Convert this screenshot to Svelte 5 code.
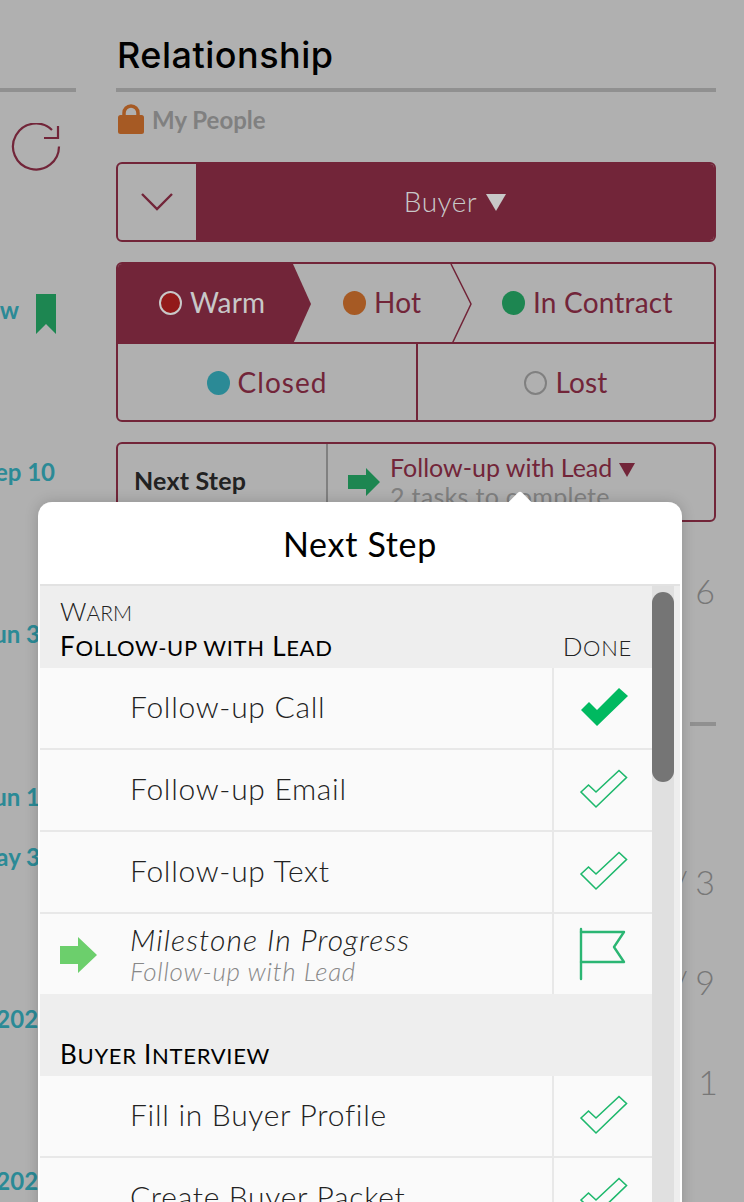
<script>
  const dates = [
    { label: 'Sep 10', cls: 'd1' },
    { label: 'Jun 3', cls: 'd2' },
    { label: 'Jun 1', cls: 'd3' },
    { label: 'May 3', cls: 'd4' },
    { label: '2020', cls: 'd5' },
    { label: '2020', cls: 'd6' }
  ];

  const firstTasks = [
    { name: 'Follow-up Call', icon: 'solid' },
    { name: 'Follow-up Email', icon: 'outline' },
    { name: 'Follow-up Text', icon: 'outline' }
  ];

  const secondTasks = [
    { name: 'Fill in Buyer Profile', icon: 'outline' },
    { name: 'Create Buyer Packet', icon: 'outline' }
  ];
</script>

{#snippet check(kind)}
  <svg class="check" width="50" height="40" viewBox="0 0 50 40">
    {#if kind === 'solid'}
      <path d="M2 23 L10 15 L18 23 L40 1 L49 9 L18 39 Z" fill="#00b960" />
    {:else}
      <path d="M2 23 L9.500 16 L17 23 L40 1.500 L47.500 8.500 L17 38 Z" fill="none" stroke="#1db86c" stroke-width="1.600" />
    {/if}
  </svg>
{/snippet}

{#snippet taskRow(task)}
  <div class="task">
    <div class="task-name">{task.name}</div>
    <div class="task-done">{@render check(task.icon)}</div>
  </div>
{/snippet}

<div class="page">
  <aside class="left">
    <div class="rule"></div>
    <svg class="reload" width="50" height="50" viewBox="0 0 50 50" fill="none" stroke="#722539" stroke-width="2.200">
      <path d="M48 23.500 A23 23 0 1 1 41 7" />
      <path d="M47 3 V15 H33" />
    </svg>
    <div class="new-row">
      <span class="date">New</span>
      <svg width="20" height="40" viewBox="0 0 20 40"><path d="M0 0 H20 V40 L10 30 L0 40 Z" fill="#1d8651" /></svg>
    </div>
    {#each dates as d}
      <div class="date {d.cls}">{d.label}</div>
    {/each}
  </aside>

  <main class="right">
    <h1>Relationship</h1>
    <div class="rule"></div>

    <div class="access">
      <svg width="26" height="30" viewBox="0 0 26 30">
        <path d="M6 13 V9 A7 7 0 0 1 20 9 V13" fill="none" stroke="#a65a24" stroke-width="3.500" />
        <rect x="0" y="11" width="26" height="19" rx="2.500" fill="#a65a24" />
      </svg>
      <span>My People</span>
    </div>

    <div class="type">
      <div class="type-toggle">
        <svg width="34" height="20" viewBox="0 0 34 20" fill="none" stroke="#722539" stroke-width="2.400"><path d="M2 2 L17 17 L32 2" /></svg>
      </div>
      <div class="type-value">
        <span class="buyer">Buyer</span>
        <svg width="20" height="17" viewBox="0 0 20 17"><path d="M0 0 H20 L10 17 Z" fill="#c8c8c8" /></svg>
      </div>
    </div>

    <div class="stages">
      <div class="stage-top">
        <svg class="chevrons" width="596" height="80" viewBox="0 0 596 80">
          <path d="M0 0 H175 L193 40 L175 80 H0 Z" fill="#722539" />
          <path d="M333 0 L353 40 L334 80" fill="none" stroke="#722539" stroke-width="1.500" />
        </svg>
        <div class="stage warm"><i class="dot red"></i>Warm</div>
        <div class="stage hot"><i class="dot orange"></i>Hot</div>
        <div class="stage contract"><i class="dot green"></i>In Contract</div>
      </div>
      <div class="stage-bottom">
        <div class="stage closed"><i class="dot teal"></i>Closed</div>
        <div class="stage lost"><i class="dot empty"></i>Lost</div>
      </div>
    </div>

    <div class="next">
      <div class="next-label">Next Step</div>
      <div class="next-value">
        <svg width="32" height="28" viewBox="0 0 32 28"><path d="M0 7 H18 V0 L32 14 L18 28 V21 H0 Z" fill="#1d8651" /></svg>
        <div class="next-text">
          <div class="next-title">
            Follow-up with Lead
            <svg width="16" height="14" viewBox="0 0 16 14"><path d="M0 0 H16 L8 14 Z" fill="#722539" /></svg>
          </div>
          <div class="next-sub">2 tasks to complete</div>
        </div>
      </div>
    </div>

    <div class="count c1">6</div>
    <div class="short-rule"></div>
    <div class="count c2">/ 3</div>
    <div class="count c3">/ 9</div>
    <div class="count c4">1</div>
  </main>

  <div class="popover">
    <div class="caret"></div>
    <header>Next Step</header>
    <div class="scroller">
      <div class="list">
        <div class="group first">
          <div class="stage-name">W<span class="low">arm</span></div>
          <div class="group-line">
            <span class="group-name">F<span class="low">ollow-up with</span> L<span class="low">ead</span></span>
            <span class="done">D<span class="low">one</span></span>
          </div>
        </div>
        {#each firstTasks as task}
          {@render taskRow(task)}
        {/each}
        <div class="task milestone">
          <svg class="arrow" width="38" height="36" viewBox="0 0 38 36"><path d="M0 9 H18 V0 L37 18 L18 36 V27 H0 Z" fill="#6ccf6c" /></svg>
          <div class="task-name">
            <div>Milestone In Progress</div>
            <div class="milestone-sub">Follow-up with Lead</div>
          </div>
          <div class="task-done">
            <svg width="48" height="54" viewBox="0 0 48 54" fill="none" stroke="#2bb673" stroke-width="2.400" stroke-linejoin="round" stroke-linecap="round">
              <path d="M2 2 V52" />
              <path d="M2 5 H45 L35 20 L45 35 H2" />
            </svg>
          </div>
        </div>
        <div class="group second">
          <div class="group-line"><span class="group-name">B<span class="low">uyer</span> I<span class="low">nterview</span></span></div>
        </div>
        {#each secondTasks as task}
          {@render taskRow(task)}
        {/each}
      </div>
      <div class="track"><div class="thumb"></div></div>
    </div>
  </div>
</div>

<style>
  :global(body) {
    margin: 0;
    background: #b0b0b0;
  }

  .page {
    position: relative;
    width: 744px;
    height: 1202px;
    overflow: hidden;
    background: #b0b0b0;
    display: flex;
    gap: 40px;
    font-family: Lato, "Open Sans", sans-serif;
    color: #722539;
  }

  .left {
    width: 76px;
    flex-shrink: 0;
    padding-top: 88px;
    box-sizing: border-box;
    display: flex;
    flex-direction: column;
  }

  .right {
    width: 600px;
    flex-shrink: 0;
    padding-top: 32px;
    box-sizing: border-box;
  }

  .rule {
    height: 4px;
    background: #909090;
  }

  .reload {
    margin: 31px 0 0 11px;
  }

  .new-row {
    display: flex;
    align-items: flex-start;
    justify-content: flex-end;
    gap: 17px;
    margin: 121px 20px 0 -40px;
    height: 40px;
  }

  .new-row .date {
    margin: 2px 0 0;
    line-height: 28px;
  }

  .date {
    font-size: 24px;
    line-height: 28px;
    font-weight: 700;
    color: #2b8a96;
    white-space: nowrap;
    text-align: right;
  }

  .d1 { margin: 124px 21px 0 -40px; }
  .d2 { margin: 134px 36px 0 -40px; }
  .d3 { margin: 135px 36px 0 -40px; }
  .d4 { margin: 32px 36px 0 -40px; }
  .d5 { margin: 134px 24px 0 -40px; }
  .d6 { margin: 134px 24px 0 -40px; }

  h1 {
    margin: 0;
    font-family: Inter, sans-serif;
    font-size: 36px;
    line-height: 44px;
    font-weight: 500;
    color: #000;
    padding: 1px 0 0 1px;
    height: 55px;
    letter-spacing: 0.5px;
  }

  .access {
    display: flex;
    align-items: center;
    gap: 8px;
    margin: 12px 0 0 2px;
    height: 30px;
    font-size: 24px;
    font-weight: 700;
    color: #808080;
  }

  .type {
    display: flex;
    height: 80px;
    margin-top: 28px;
    box-sizing: border-box;
    border: 2px solid #722539;
    border-radius: 6px;
    overflow: hidden;
  }

  .type-toggle {
    width: 78px;
    display: flex;
    align-items: center;
    justify-content: center;
  }

  .type-value {
    flex: 1;
    display: flex;
    align-items: center;
    justify-content: center;
    gap: 9px;
    background: #722539;
    color: #c8c8c8;
    font-size: 28px;
    font-weight: 300;
    letter-spacing: 0.5px;
  }

  .buyer {
    padding-bottom: 2px;
  }

  .stages {
    margin-top: 20px;
    height: 160px;
    box-sizing: border-box;
    border: 2px solid #722539;
    border-radius: 6px;
    overflow: hidden;
    font-size: 28px;
    letter-spacing: 0.2px;
  }

  .stage-top {
    position: relative;
    height: 78px;
    overflow: hidden;
    border-bottom: 2px solid #722539;
    display: flex;
    align-items: center;
  }

  .chevrons {
    position: absolute;
    left: 0;
    top: 0;
  }

  .stage {
    position: relative;
    display: flex;
    align-items: center;
    gap: 8px;
    padding-bottom: 2px;
    box-sizing: border-box;
    white-space: nowrap;
  }

  .warm {
    width: 184px;
    padding-left: 41px;
    color: #c8c8c8;
  }

  .hot {
    width: 159px;
    padding-left: 41px;
  }

  .contract {
    padding-left: 41px;
  }

  .closed {
    letter-spacing: 1px;
  }

  .dot {
    display: block;
    width: 23px;
    height: 24px;
    margin-top: 2px;
    border-radius: 50%;
    box-sizing: border-box;
    flex-shrink: 0;
  }

  .red { background: #931a1a; border: 2px solid #c8c8c8; }
  .orange { background: #a65a24; }
  .green { background: #1d8651; }
  .teal { background: #2b8a96; }
  .empty { border: 2px solid #808080; }

  .stage-bottom {
    display: grid;
    grid-template-columns: 298px 1fr;
    height: 78px;
  }

  .stage-bottom .stage {
    justify-content: center;
  }

  .lost {
    border-left: 2px solid #722539;
  }

  .next {
    position: relative;
    display: flex;
    margin-top: 20px;
    height: 80px;
    box-sizing: border-box;
    border: 2px solid #722539;
    border-radius: 6px;
  }

  .next-label {
    width: 210px;
    padding: 19px 0 0 16px;
    box-sizing: border-box;
    border-right: 2px solid #808080;
    font-size: 25px;
    line-height: 34px;
    font-weight: 700;
    letter-spacing: 0.2px;
    color: #222;
  }

  .next-value {
    flex: 1;
    display: flex;
    align-items: center;
    gap: 10px;
    padding-left: 20px;
  }

  .next-text {
    padding-bottom: 1px;
  }

  .next-title {
    font-size: 25px;
    line-height: 29px;
  }

  .next-sub {
    font-size: 25px;
    line-height: 29px;
    letter-spacing: 0.3px;
    color: #808080;
  }

  .count {
    font-size: 34px;
    line-height: 40px;
    font-weight: 300;
    color: #777;
    text-align: right;
    padding-right: 1px;
  }

  .c1 { margin-top: 49px; }
  .c2 { margin-top: 136px; word-spacing: -2px; }
  .c3 { margin-top: 60px; word-spacing: -2px; }
  .c4 { margin: 60px -2px 0 0; padding-right: 0; }

  .short-rule {
    height: 4px;
    background: #909090;
    margin: 111px 0 0 574px;
  }

  .popover {
    position: absolute;
    left: 38px;
    top: 502px;
    width: 644px;
    height: 720px;
    box-sizing: border-box;
    background: #fff;
    border: solid #fff;
    border-width: 0 2px;
    border-radius: 14px 14px 0 0;
    box-shadow: 0 0 14px rgba(0, 0, 0, 0.18);
    color: #333;
  }

  .caret {
    position: absolute;
    left: 472px;
    top: -8px;
    width: 16px;
    height: 16px;
    background: #fff;
    transform: rotate(45deg);
    border-radius: 3px 0 0 0;
  }

  header {
    position: relative;
    height: 82px;
    display: flex;
    align-items: center;
    justify-content: center;
    font-size: 34px;
    letter-spacing: 0.7px;
    color: #000;
    border-bottom: 2px solid #e2e2e2;
  }

  .scroller {
    display: flex;
    background: #eee;
    padding-right: 6px;
  }

  .list {
    width: 612px;
    flex-shrink: 0;
  }

  .track {
    width: 22px;
    height: 640px;
    background: #e0e0e0;
  }

  .thumb {
    position: relative;
    top: 6px;
    height: 190px;
    border-radius: 11px;
    background: #757575;
  }

  .group {
    box-sizing: border-box;
    height: 82px;
    padding: 0 20px;
    background: #eee;
    font-size: 26px;
  }

  .low {
    font-size: 21px;
    text-transform: uppercase;
  }

  .first {
    padding-top: 9px;
  }

  .second {
    padding-top: 43px;
  }

  .stage-name {
    line-height: 33px;
    font-weight: 300;
    color: #222;
  }

  .group-line {
    display: flex;
    justify-content: space-between;
    line-height: 34px;
    letter-spacing: 0.7px;
  }

  .group-line .low {
    font-size: 22px;
  }

  .group-name {
    color: #000;
  }

  .done {
    font-weight: 300;
    color: #222;
  }

  .task {
    position: relative;
    display: flex;
    height: 82px;
    box-sizing: border-box;
    background: #fafafa;
    border-bottom: 2px solid #e8e8e8;
  }

  .task-name {
    flex: 1;
    padding: 0 0 4px 90px;
    display: flex;
    flex-direction: column;
    justify-content: center;
    font-size: 30px;
    font-weight: 300;
    letter-spacing: 0.7px;
    color: #222;
  }

  .task-done {
    width: 98px;
    border-left: 2px solid #e8e8e8;
    display: flex;
    align-items: center;
    justify-content: center;
  }

  .check {
    margin: -3px 0 0 2px;
  }

  .milestone {
    border-bottom: 0;
    height: 80px;
  }

  .milestone .task-name {
    padding: 2px 0 0 90px;
    font-style: italic;
    line-height: 32px;
    letter-spacing: 1.1px;
  }

  .milestone-sub {
    font-size: 26px;
    line-height: 32px;
    letter-spacing: 0.7px;
    color: #888;
  }

  .arrow {
    position: absolute;
    left: 20px;
    top: 23px;
  }
</style>
